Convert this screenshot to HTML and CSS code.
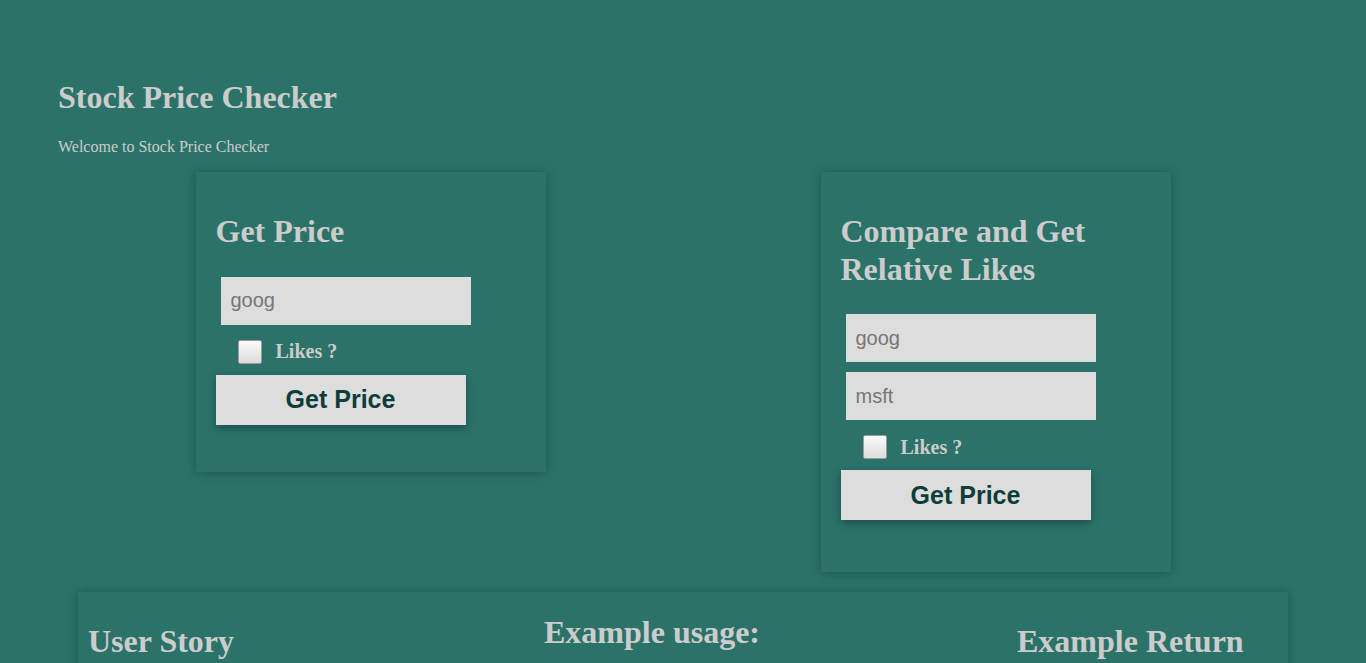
FILE: index.html
```html
<!DOCTYPE html>
<html lang="en">
<head>
<meta charset="utf-8">
<title>Stock Price Checker</title>
<link rel="stylesheet" href="styles.css">
</head>
<body>
<main class="page">
  <header>
    <h1 class="title">Stock Price Checker</h1>
    <p class="welcome">Welcome to Stock Price Checker</p>
  </header>

  <section class="forms">
    <div class="col">
      <form class="card card--single">
        <h2 class="card-title">Get Price</h2>
        <input class="field" type="text" name="stock" placeholder="goog">
        <label class="likes"><input class="check" type="checkbox" name="like"><span>Likes ?</span></label>
        <button class="btn" type="button">Get Price</button>
      </form>
    </div>
    <div class="col">
      <form class="card card--compare">
        <h2 class="card-title">Compare and Get Relative Likes</h2>
        <input class="field" type="text" name="stock1" placeholder="goog">
        <input class="field" type="text" name="stock2" placeholder="msft">
        <label class="likes"><input class="check" type="checkbox" name="like"><span>Likes ?</span></label>
        <button class="btn" type="button">Get Price</button>
      </form>
    </div>
  </section>

  <section class="info">
    <div class="info-col">
      <h2 class="info-title">User Story</h2>
    </div>
    <div class="info-col">
      <h2 class="info-title info-title--raised">Example usage:</h2>
    </div>
    <div class="info-col">
      <h2 class="info-title">Example Return</h2>
    </div>
  </section>
</main>
</body>
</html>
```

FILE: styles.css
```css
* { box-sizing: border-box; }

html, body {
  background: #2b7369;
}

body {
  margin: 8px;
  color: #cccccc;
  font-family: "Liberation Serif", "Times New Roman", serif;
}

.page {
  padding: 50px;
}

.title {
  font-size: 32px;
  font-weight: bold;
  margin: 21.44px 0;
}

.welcome {
  font-size: 16px;
  margin: 16px 0;
}

.forms {
  display: flex;
}

.col {
  flex: 1 1 0;
  display: flex;
  justify-content: center;
  align-items: flex-start;
}

.card {
  width: 350px;
  padding: 20px;
  background: #2b7369;
  box-shadow: 0 1px 10px rgba(0, 0, 0, 0.28);
  display: flex;
  flex-direction: column;
  align-items: flex-start;
}

.card--single { height: 300px; }
.card--compare { height: 400px; }

.card-title {
  font-size: 32px;
  font-weight: bold;
  margin: 21.44px 0;
  line-height: 37.2px;
}

.field {
  width: 250px;
  height: 48px;
  margin: 5px;
  border: none;
  outline: none;
  background: #dddddd;
  padding: 0 10px;
  font-family: "Liberation Sans", Arial, sans-serif;
  font-size: 20px;
  color: #333;
}

.field::placeholder {
  color: #767676;
}

.likes {
  display: flex;
  align-items: center;
  height: 45px;
  padding: 0 0 1px 22px;
  font-weight: bold;
  font-size: 20px;
}

.check {
  appearance: none;
  -webkit-appearance: none;
  width: 24px;
  height: 24px;
  margin: 0 14px 0 0;
  border: 1px solid #9a9a9a;
  border-radius: 2px;
  background: linear-gradient(#fbfbfb, #dcdcdc);
}

.btn {
  width: 250px;
  height: 50px;
  border: none;
  background: #dddddd;
  color: #0e3d39;
  font-family: "Liberation Sans", Arial, sans-serif;
  font-weight: bold;
  font-size: 25px;
  box-shadow: 0 3px 8px rgba(0, 0, 0, 0.35);
  cursor: pointer;
}

.info {
  margin: 20px;
  padding: 10px 10px 60px;
  background: #2b7369;
  box-shadow: 0 1px 10px rgba(0, 0, 0, 0.28);
  display: grid;
  grid-template-columns: 456px 473px 1fr;
  align-items: start;
}

.info-title {
  font-size: 32px;
  font-weight: bold;
  margin: 21.44px 0;
  line-height: 36.8px;
}

.info-title--raised {
  margin-top: 12px;
}
```
